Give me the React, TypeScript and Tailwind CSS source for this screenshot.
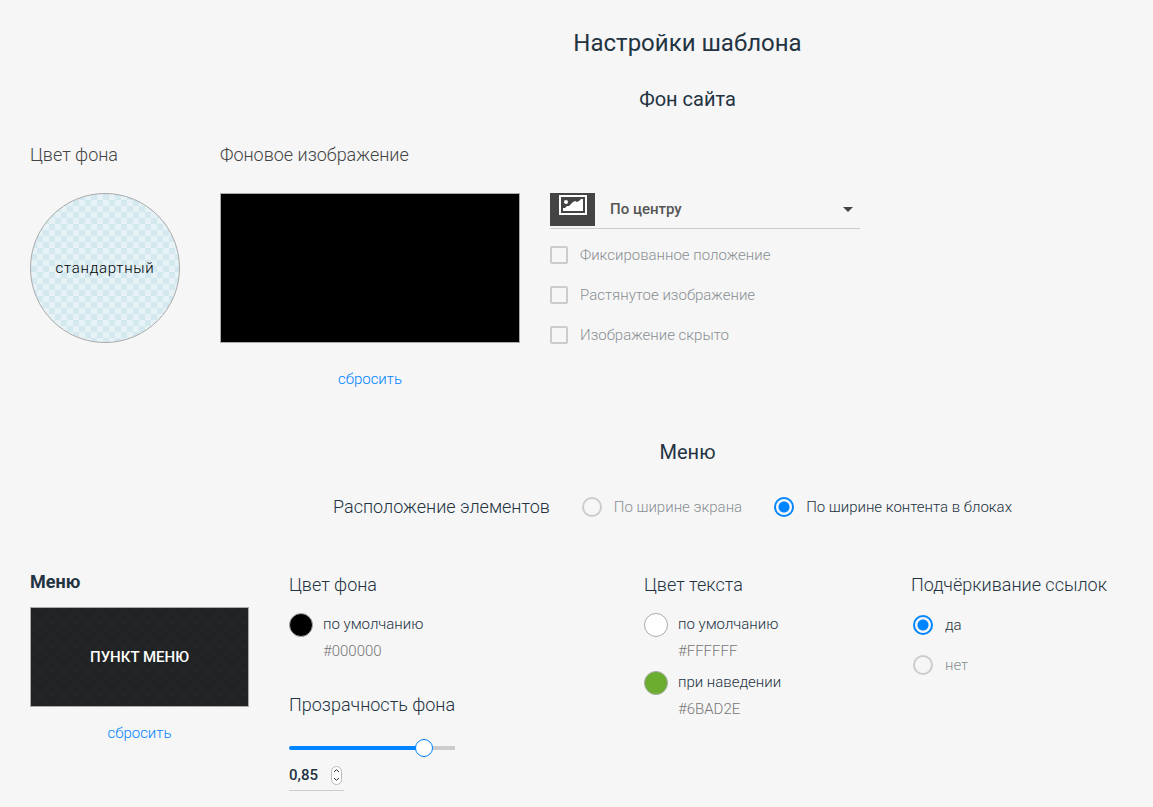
import { useState } from 'react'

const backgroundFlags = ['Фиксированное положение', 'Растянутое изображение', 'Изображение скрыто']

const textColors = [
  { label: 'по умолчанию', value: '#FFFFFF', swatch: 'bg-white' },
  { label: 'при наведении', value: '#6BAD2E', swatch: 'bg-[#6bad2e]' },
]

const checkboxClass =
  'size-[18px] shrink-0 appearance-none rounded-xs border-2 border-[#ccc] checked:border-[#0084ff] checked:bg-[#0084ff]'

const radioClass =
  'peer size-5 shrink-0 appearance-none rounded-full border-2 border-[#ccc] checked:border-[#0084ff] checked:bg-[radial-gradient(circle,#0084ff_5px,transparent_6px)]'

function Radio({ name, label, checked, onChange }: { name: string; label: string; checked: boolean; onChange: () => void }) {
  return (
    <label className="flex h-5 items-center gap-3">
      <input type="radio" name={name} checked={checked} onChange={onChange} className={radioClass} />
      <span className="text-[15px] leading-5 font-light text-[#8a9094] peer-checked:text-[#233342]">{label}</span>
    </label>
  )
}

function ColorRow({ label, value, swatch }: { label: string; value: string; swatch: string }) {
  return (
    <button type="button" className="flex gap-2.5 text-left">
      <span className={`size-6 shrink-0 rounded-full border border-[#aaa] ${swatch}`} />
      <span className="flex flex-col text-[15px] leading-[27px] font-light">
        <span className="-mt-0.5">{label}</span>
        <span className="text-[#777]">{value}</span>
      </span>
    </button>
  )
}

function ResetButton() {
  return (
    <button type="button" className="self-center text-[15px] leading-5 font-light text-[#0084ff]">
      сбросить
    </button>
  )
}

function ImageIcon() {
  return (
    <svg width="28" height="20" viewBox="0 0 28 20" aria-hidden="true">
      <rect x="1" y="1" width="26" height="18" fill="none" stroke="#fff" strokeWidth="2" />
      <circle cx="7" cy="7" r="2" fill="#fff" />
      <path d="M4 16V13H6L8 11H10L12 9L13 8L14 7L16 6L18 7L20 6L22 4H24V16Z" fill="#fff" />
    </svg>
  )
}

function SiteBackground() {
  return (
    <section>
      <h2 className="mt-[26px] pl-[222px] text-center text-xl leading-[30px]">Фон сайта</h2>
      <div className="mt-[26px] flex items-start">
        <div className="flex flex-col">
          <h3 className="text-lg leading-[30px] font-light text-[#444]">Цвет фона</h3>
          <button
            type="button"
            className="mt-[23px] size-[150px] rounded-full border border-[#aaa] bg-[repeating-conic-gradient(#e6f2f6_0_25%,#d4e8ef_0_50%)] bg-[length:12px_12px] text-[15px] font-light tracking-wider text-black"
          >
            стандартный
          </button>
        </div>
        <div className="ml-10 flex flex-col">
          <h3 className="text-lg leading-[30px] font-light text-[#444]">Фоновое изображение</h3>
          <button type="button" aria-label="Фоновое изображение" className="mt-[23px] mb-[26px] h-[150px] w-[300px] border border-[#aaa] bg-black" />
          <ResetButton />
        </div>
        <div className="mt-[53px] ml-[30px] w-[310px]">
          <div className="flex h-9 items-start border-b border-[#ccc]">
            <span className="flex h-[33px] w-[45px] justify-center bg-[#444] pt-0.5">
              <ImageIcon />
            </span>
            <div className="grid flex-1 items-center">
              <select
                aria-label="Положение"
                defaultValue="center"
                className="col-start-1 row-start-1 h-8 appearance-none bg-transparent pl-[15px] text-[15px] font-medium text-[#555]"
              >
                <option value="center">По центру</option>
                <option value="left">Слева</option>
                <option value="right">Справа</option>
              </select>
              <svg width="10" height="5" viewBox="0 0 10 5" aria-hidden="true" className="pointer-events-none col-start-1 row-start-1 mr-[7px] justify-self-end">
                <path d="M0 0H10L5 5Z" fill="#444" />
              </svg>
            </div>
          </div>
          <div className="mt-4 flex flex-col gap-5">
            {backgroundFlags.map((flag) => (
              <label key={flag} className="flex h-5 items-center gap-3 text-[15px] leading-5 font-light text-[#8a9094]">
                <input type="checkbox" className={checkboxClass} />
                {flag}
              </label>
            ))}
          </div>
        </div>
      </div>
    </section>
  )
}

function MenuSettings() {
  const [placement, setPlacement] = useState('content')
  const [underline, setUnderline] = useState(true)
  const [opacity, setOpacity] = useState(85)

  const step = (delta: number) => setOpacity((v) => Math.min(100, Math.max(0, v + delta)))
  const fill = `calc(9px + (100% - 18px) * ${opacity / 100})`

  return (
    <section>
      <h2 className="mt-12 pl-[222px] text-center text-xl leading-[30px]">Меню</h2>
      <div className="mt-[25px] flex h-[30px] items-center justify-center pl-[192px]">
        <span className="mr-8 text-lg leading-[30px] font-light">Расположение элементов</span>
        <div className="flex gap-8">
          <Radio name="placement" label="По ширине экрана" checked={placement === 'screen'} onChange={() => setPlacement('screen')} />
          <Radio name="placement" label="По ширине контента в блоках" checked={placement === 'content'} onChange={() => setPlacement('content')} />
        </div>
      </div>

      <div className="mt-[45px] grid grid-cols-[219px_315px_227px_1fr] items-start gap-x-10">
        <div className="flex flex-col">
          <h3 className="text-lg leading-[30px] font-bold">Меню</h3>
          <button
            type="button"
            className="mt-2.5 mb-4 h-[100px] border border-[#aaa] bg-[repeating-conic-gradient(#232425_0_25%,#202324_0_50%)] bg-[length:12px_12px] text-[15px] font-medium text-white"
          >
            ПУНКТ МЕНЮ
          </button>
          <ResetButton />
        </div>

        <div className="mt-[3px]">
          <h3 className="mb-[13px] text-lg leading-[30px] font-light">Цвет фона</h3>
          <ColorRow label="по умолчанию" value="#000000" swatch="bg-black" />
          <label htmlFor="opacity" className="mt-[25px] block text-lg leading-[30px] font-light">
            Прозрачность фона
          </label>
          <input
            id="opacity"
            type="range"
            min={0}
            max={100}
            value={opacity}
            onChange={(e) => setOpacity(Number(e.target.value))}
            style={{ backgroundImage: `linear-gradient(to right, #0084ff ${fill}, #ccc ${fill})` }}
            className="mt-[26px] block h-1 w-[166px] appearance-none rounded-l-sm [&::-webkit-slider-thumb]:size-[18px] [&::-webkit-slider-thumb]:appearance-none [&::-webkit-slider-thumb]:rounded-full [&::-webkit-slider-thumb]:border [&::-webkit-slider-thumb]:border-[#0084ff] [&::-webkit-slider-thumb]:bg-white"
          />
          <div className="mt-2.5 flex h-[31px] w-[55px] items-center justify-between border-b border-[#ccc] pr-0.5">
            <input
              type="text"
              aria-label="Значение прозрачности"
              value={(opacity / 100).toFixed(2).replace('.', ',')}
              onChange={(e) => setOpacity(Math.round(Number(e.target.value.replace(',', '.')) * 100) || 0)}
              className="w-9 bg-transparent text-[15px] font-medium"
            />
            <div className="flex h-[19px] w-[11px] shrink-0 flex-col overflow-hidden rounded-full border border-[#bbb] bg-white">
              <button type="button" aria-label="Больше" onClick={() => step(1)} className="flex flex-1 items-center justify-center">
                <svg width="5" height="3" viewBox="0 0 5 3" fill="none" stroke="#333">
                  <path d="M0 3L2.5 .7L5 3" />
                </svg>
              </button>
              <button type="button" aria-label="Меньше" onClick={() => step(-1)} className="flex flex-1 items-center justify-center">
                <svg width="5" height="3" viewBox="0 0 5 3" fill="none" stroke="#333">
                  <path d="M0 0L2.5 2.3L5 0" />
                </svg>
              </button>
            </div>
          </div>
        </div>

        <div className="mt-[3px]">
          <h3 className="mb-[13px] text-lg leading-[30px] font-light">Цвет текста</h3>
          <div className="flex flex-col gap-1.5">
            {textColors.map((color) => (
              <ColorRow key={color.value} {...color} />
            ))}
          </div>
        </div>

        <div className="mt-[3px]">
          <h3 className="mb-[15px] text-lg leading-[30px] font-light whitespace-nowrap">Подчёркивание ссылок</h3>
          <div className="flex flex-col gap-5 pl-0.5">
            <Radio name="underline" label="да" checked={underline} onChange={() => setUnderline(true)} />
            <Radio name="underline" label="нет" checked={!underline} onChange={() => setUnderline(false)} />
          </div>
        </div>
      </div>
    </section>
  )
}

function App() {
  return (
    <main className="min-h-screen bg-[#f6f6f6] px-[30px] pt-7 pb-4 font-[Roboto,sans-serif] text-[#233342]">
      <h1 className="pl-[222px] text-center text-2xl leading-[30px]">Настройки шаблона</h1>
      <SiteBackground />
      <MenuSettings />
    </main>
  )
}

export default App
